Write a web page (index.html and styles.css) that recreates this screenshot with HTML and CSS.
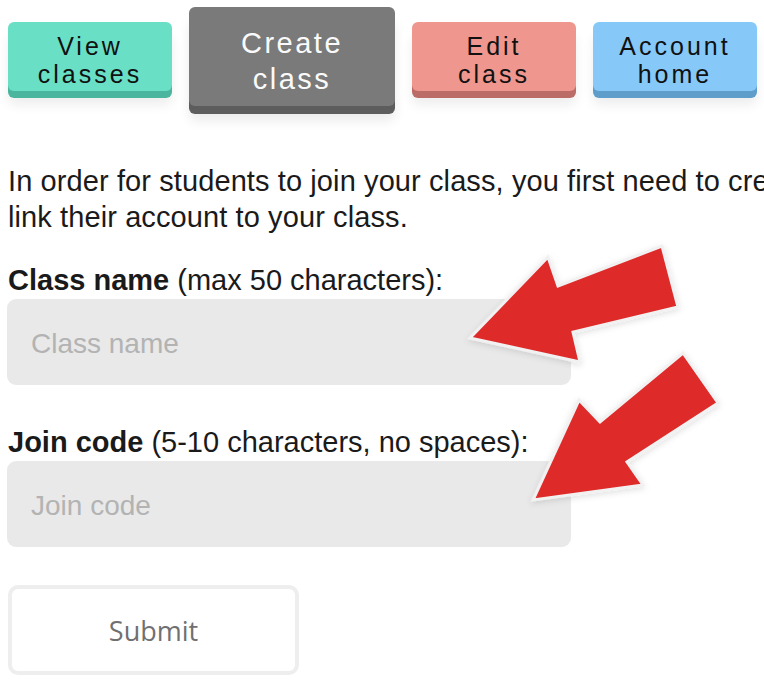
FILE: index.html
```html
<!DOCTYPE html>
<html lang="en">
<head>
<meta charset="utf-8">
<title>Create class</title>
<link rel="stylesheet" href="styles.css">
</head>
<body>
<div class="page">
  <nav class="tabs">
    <a class="tab tab-view" href="#">View<br>classes</a>
    <a class="tab tab-create" href="#">Create<br>class</a>
    <a class="tab tab-edit" href="#">Edit<br>class</a>
    <a class="tab tab-account" href="#">Account<br>home</a>
  </nav>

  <p class="intro">In order for students to join your class, you first need to create a join code that they can use to<br>link their account to your class.</p>

  <form class="form">
    <label class="label label-first" for="cname"><b>Class name</b> (max 50 characters):</label>
    <input class="field" id="cname" type="text" placeholder="Class name">
    <label class="label label-second" for="jcode"><b>Join code</b> (5-10 characters, no spaces):</label>
    <input class="field" id="jcode" type="text" placeholder="Join code">
    <button class="submit" type="button">Submit</button>
  </form>

  <svg class="arrows" width="764" height="692" viewBox="0 0 764 692" aria-hidden="true">
    <defs>
      <filter id="sh" x="-20%" y="-20%" width="140%" height="140%">
        <feDropShadow dx="0" dy="2" stdDeviation="3" flood-color="#000" flood-opacity="0.12"/>
      </filter>
    </defs>
    <polygon class="arrow" filter="url(#sh)" points="470,338 548,257 558,286 662,246 678,307 573,332 580,362"/>
    <polygon class="arrow" filter="url(#sh)" points="533,500 579,400 600,422 683,353 718,403 627,462 643,485"/>
  </svg>
</div>
</body>
</html>
```

FILE: styles.css
```css
html, body {
  margin: 0;
  padding: 0;
  background: #ffffff;
  overflow: hidden;
}

.page {
  position: relative;
  width: 764px;
  height: 692px;
  padding-left: 8px;
  box-sizing: border-box;
  font-family: "Liberation Sans", Arial, sans-serif;
  color: #1a1a1a;
  overflow: hidden;
}

.tabs {
  display: flex;
  align-items: center;
  gap: 17px;
  padding-top: 7px;
}

.tab {
  display: block;
  width: 164px;
  box-sizing: border-box;
  text-align: center;
  text-decoration: none;
  color: #111;
  font-size: 25px;
  line-height: 28px;
  letter-spacing: 3px;
  padding: 10px 0 3px;
  border-radius: 6px;
}

.tab-view {
  background: #69e0c6;
  box-shadow: 0 7px 0 #4cb59d, 0 14px 12px rgba(0, 0, 0, 0.07);
}

.tab-create {
  width: 206px;
  background: #7a7a7a;
  color: #fafafa;
  font-size: 29px;
  line-height: 36px;
  letter-spacing: 2.5px;
  padding: 18px 0 9px;
  box-shadow: 0 8px 0 #5d5d5d, 0 15px 12px rgba(0, 0, 0, 0.08);
}

.tab-edit {
  background: #ef968e;
  box-shadow: 0 7px 0 #bb6c66, 0 14px 12px rgba(0, 0, 0, 0.07);
}

.tab-account {
  background: #86c9f8;
  box-shadow: 0 7px 0 #5f9ecb, 0 14px 12px rgba(0, 0, 0, 0.07);
}

.intro {
  margin: 57px 0 0;
  font-size: 29px;
  line-height: 36px;
  letter-spacing: 0.1px;
  white-space: nowrap;
  overflow: hidden;
}

.form {
  display: flex;
  flex-direction: column;
  align-items: flex-start;
}

.label {
  font-size: 29px;
  line-height: 35px;
  color: #1a1a1a;
}

.label b {
  font-weight: bold;
}

.label-first {
  margin-top: 28px;
}

.label-second {
  margin-top: 40px;
}

.field {
  width: 564px;
  height: 86px;
  box-sizing: border-box;
  margin-top: 1px;
  margin-left: -1px;
  border: none;
  border-radius: 9px;
  background: #e9e9e9;
  padding: 4px 24px 0;
  font-family: "Liberation Sans", Arial, sans-serif;
  font-size: 28px;
  color: #333;
  outline: none;
}

.field::placeholder {
  color: #b3b3b3;
}

.submit {
  margin-top: 38px;
  width: 291px;
  height: 90px;
  box-sizing: border-box;
  border: 4px solid #eeeeee;
  border-radius: 10px;
  background: #ffffff;
  font-family: "Open Sans", "DejaVu Sans", sans-serif;
  font-size: 27px;
  color: #707070;
  padding: 0;
}

.arrows {
  position: absolute;
  left: 0;
  top: 0;
  pointer-events: none;
}

.arrow {
  fill: #df2a2a;
  stroke: #f1f1f1;
  stroke-width: 3;
  stroke-linejoin: miter;
}
```
